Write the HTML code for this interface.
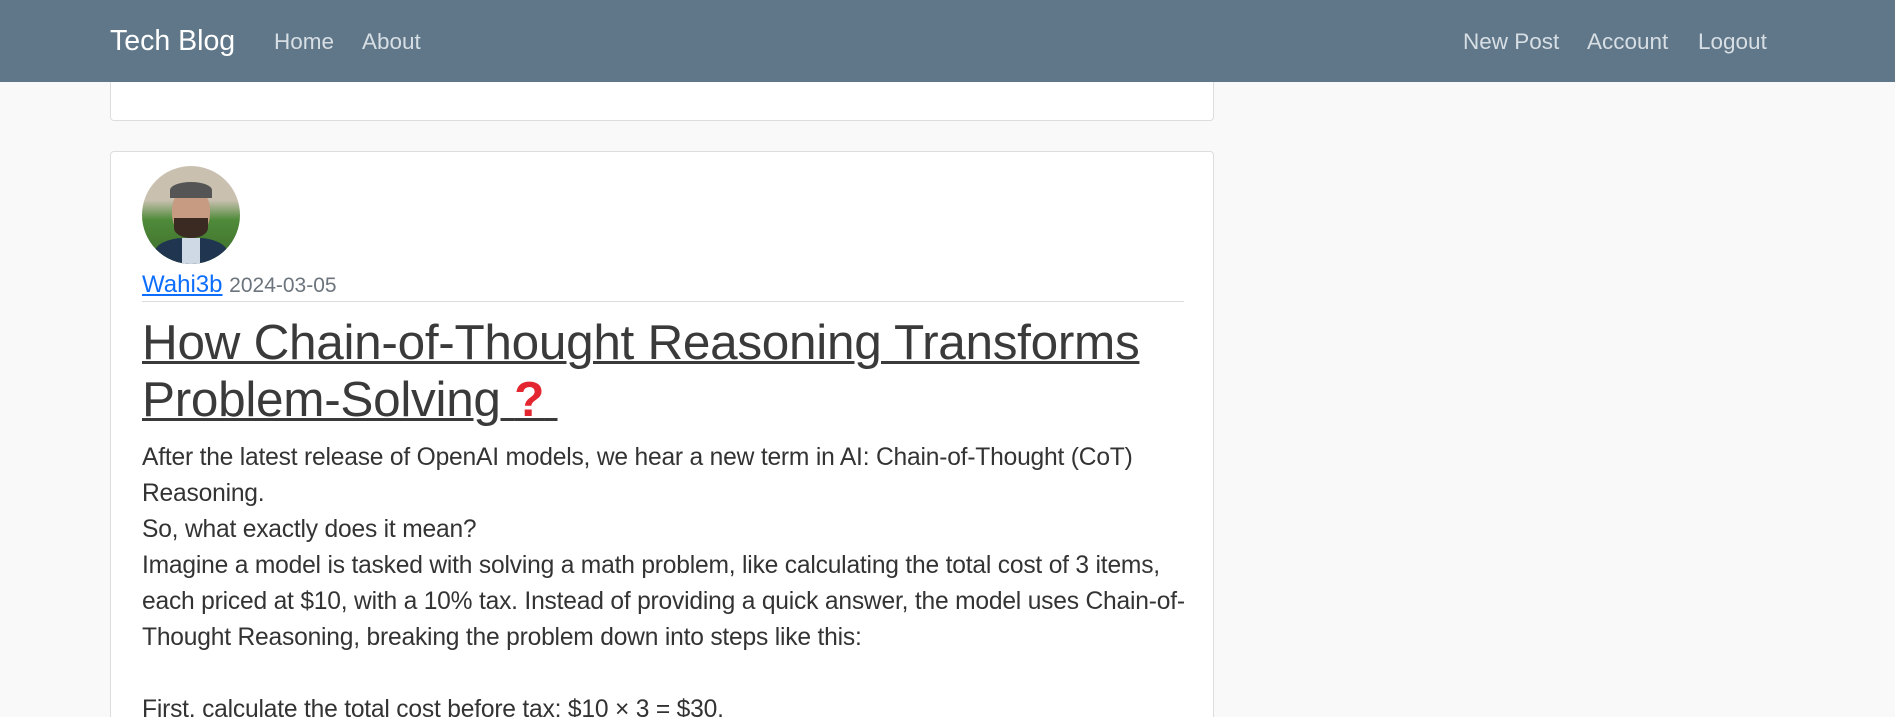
<!DOCTYPE html>
<html><head><meta charset="utf-8"><style>
*{box-sizing:border-box;margin:0;padding:0}
html,body{width:1895px;height:717px;overflow:hidden}
body{position:relative;background:#f9f9f9;font-family:"Liberation Sans",sans-serif;color:#333}
.nav{position:absolute;left:0;top:0;width:1895px;height:82px;background:#607789;z-index:5}
.nav a{position:absolute;top:29px;font-size:22.5px;color:#d7dee4;text-decoration:none;white-space:nowrap}
.brand{left:110px!important;top:25px!important;font-size:28.5px!important;color:#fff!important}
.card{position:absolute;left:110px;width:1104px;background:#fff;border:1px solid #ddd;border-radius:4px;overflow:hidden}
.av{position:absolute;left:31px;top:14px;width:98px;height:98px;border-radius:50%;overflow:hidden;background:linear-gradient(#c9c0b0 0,#c9c0b0 35%,#4f8a3a 55%,#3c6d2a 100%)}
.meta{position:absolute;left:31px;top:119px;font-size:24px;white-space:nowrap}
.meta a{color:#0d6efd;text-decoration:underline}
.meta span{color:#6c757d;font-size:21px}
.hr{position:absolute;left:31px;top:149px;width:1042px;border-top:1px solid #ddd}
h2{position:absolute;left:31px;top:162px;font-size:49.5px;line-height:57px;font-weight:normal;white-space:nowrap;letter-spacing:-0.3px}
h2 a{color:#3a3a3a;text-decoration:underline;text-decoration-thickness:3px}
.q{color:#e3262f;font-weight:bold}
.body{position:absolute;left:31px;top:288px;font-size:24.6px;line-height:36px;white-space:nowrap;color:#333;letter-spacing:-0.2px}
</style></head><body>
<div class="card" style="top:60px;height:61px;border-top:none;border-radius:0 0 4px 4px"></div>
<div class="card" style="top:151px;height:580px">
<div class="av">
<div style="position:absolute;left:30px;top:22px;width:38px;height:48px;border-radius:45%;background:#c79a82"></div>
<div style="position:absolute;left:28px;top:16px;width:42px;height:16px;border-radius:50% 50% 0 0;background:#555"></div>
<div style="position:absolute;left:32px;top:52px;width:34px;height:20px;border-radius:0 0 50% 50%;background:#3a2a22"></div>
<div style="position:absolute;left:12px;top:72px;width:74px;height:40px;border-radius:40% 40% 0 0;background:#1f3550"></div>
<div style="position:absolute;left:40px;top:72px;width:18px;height:30px;background:#cfd9e6"></div>
</div>
<div class="meta"><a>Wahi3b</a> <span>2024-03-05</span></div>
<div class="hr"></div>
<h2><a>How Chain-of-Thought Reasoning Transforms<br>Problem-Solving <span class="q">?</span>&nbsp;</a></h2>
<div class="body">After the latest release of OpenAI models, we hear a new term in AI: Chain-of-Thought (CoT)<br>Reasoning.<br>So, what exactly does it mean?<br>Imagine a model is tasked with solving a math problem, like calculating the total cost of 3 items,<br>each priced at $10, with a 10% tax. Instead of providing a quick answer, the model uses Chain-of-<br>Thought Reasoning, breaking the problem down into steps like this:<br><br>First, calculate the total cost before tax: $10 × 3 = $30.</div>
</div>
<div class="nav">
<a class="brand">Tech Blog</a>
<a style="left:274px">Home</a>
<a style="left:362px">About</a>
<a style="left:1463px">New Post</a>
<a style="left:1587px">Account</a>
<a style="left:1698px">Logout</a>
</div>
</body></html>
